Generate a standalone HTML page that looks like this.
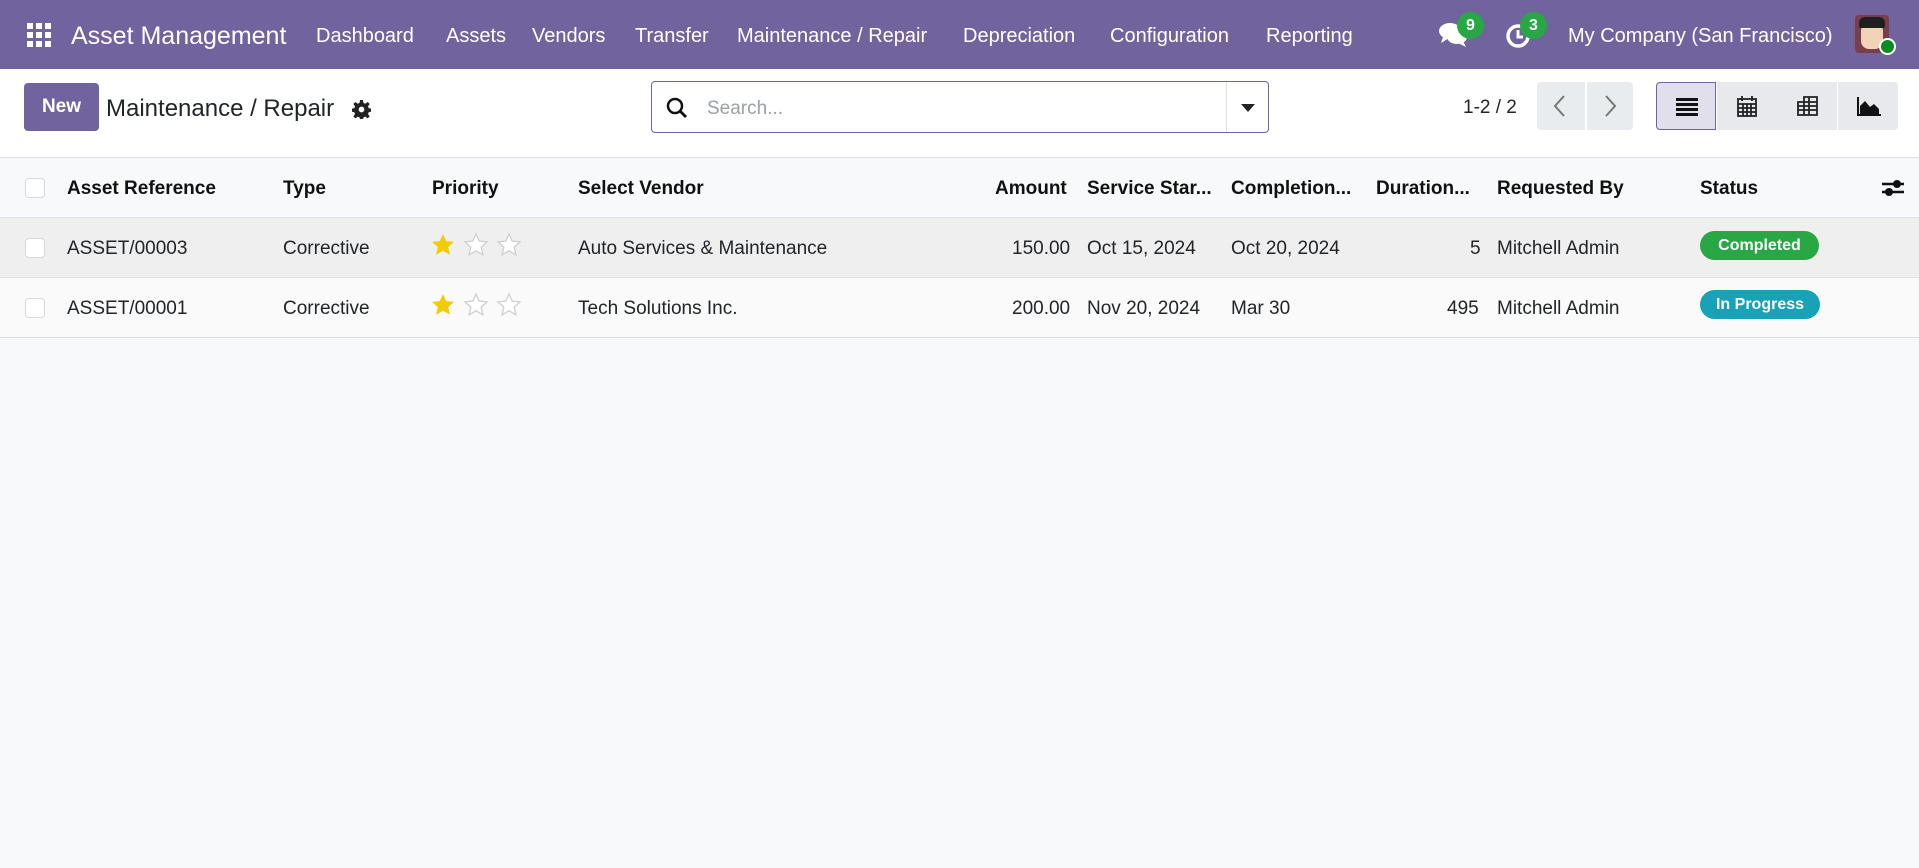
<!DOCTYPE html>
<html><head><meta charset="utf-8"><style>
*{box-sizing:border-box;margin:0;padding:0}
body{width:1919px;height:868px;background:#f8f9fa;font-family:"Liberation Sans",sans-serif;color:#212529;position:relative;overflow:hidden}
.nav{position:absolute;left:0;top:0;width:1919px;height:69px;background:#71639e;color:#fff}
.nav span{position:absolute;top:25px;font-size:20px}
.cp{position:absolute;left:0;top:69px;width:1919px;height:89px;background:#fff;border-bottom:1px solid #dee2e6}
.abs{position:absolute}
.tbl{position:absolute;left:0;top:158px;width:1919px}
.row{position:absolute;left:0;width:1919px;height:60px;border-bottom:1px solid #dee2e6}
.row span{position:absolute;top:20px;font-size:19px;white-space:nowrap}
.h span{font-weight:bold;color:#111}
.cb{position:absolute;left:25px;top:20px;width:20px;height:20px;border:1px solid #d5d8dc;border-radius:4px;background:#fff}
.badge{position:absolute;border-radius:14px;color:#fff;font-weight:bold;font-size:16px;text-align:center}
.vb{position:absolute;top:13px;width:60px;height:48px;background:#e7e9ed}
</style></head><body>
<svg width="0" height="0" style="position:absolute"><defs><path id="star" d="M12 1l3.2 7.1 7.8.8-5.8 5.2 1.7 7.7L12 17.8 5.1 21.8l1.7-7.7L1 8.9l7.8-.8z"/></defs></svg>
<div class="nav">
<svg class="abs" style="left:27px;top:23px" width="24" height="24" viewBox="0 0 24 24" fill="#fff"><rect x="0" y="0" width="6" height="6"/><rect x="9" y="0" width="6" height="6"/><rect x="18" y="0" width="6" height="6"/><rect x="0" y="9" width="6" height="6"/><rect x="9" y="9" width="6" height="6"/><rect x="18" y="9" width="6" height="6"/><rect x="0" y="18" width="6" height="6"/><rect x="9" y="18" width="6" height="6"/><rect x="18" y="18" width="6" height="6"/></svg>
<span style="left:71px;top:22px;font-size:25px">Asset Management</span>
<span style="left:316px">Dashboard</span>
<span style="left:446px">Assets</span>
<span style="left:532px">Vendors</span>
<span style="left:635px">Transfer</span>
<span style="left:737px">Maintenance / Repair</span>
<span style="left:963px">Depreciation</span>
<span style="left:1110px">Configuration</span>
<span style="left:1266px">Reporting</span>
<svg class="abs" style="left:1439px;top:22px" width="30" height="26" viewBox="0 0 30 26" fill="#fff"><ellipse cx="11" cy="9" rx="11" ry="8"/><path d="M4 15 L2 21 L10 16Z"/><ellipse cx="18" cy="15" rx="10" ry="7"/><path d="M24 19 L27 25 L19 21Z"/></svg>
<div class="badge" style="left:1457px;top:12px;width:27px;height:27px;line-height:27px;background:#28a745">9</div>
<svg class="abs" style="left:1505px;top:23px" width="26" height="26" viewBox="0 0 26 26"><circle cx="13" cy="13" r="10" fill="none" stroke="#fff" stroke-width="3.5"/><path d="M13 7v7h5" stroke="#fff" stroke-width="3" fill="none"/></svg>
<div class="badge" style="left:1520px;top:12px;width:27px;height:27px;line-height:27px;background:#28a745">3</div>
<span style="left:1568px">My Company (San Francisco)</span>
<div class="abs" style="left:1855px;top:15px;width:34px;height:38px;background:#7a3d4a;border-radius:4px;overflow:hidden"><div class="abs" style="left:6px;top:8px;width:22px;height:26px;background:#f1d3b8;border-radius:8px"></div><div class="abs" style="left:4px;top:2px;width:26px;height:11px;background:#1f1f1f;border-radius:6px 6px 2px 2px"></div></div>
<div class="abs" style="left:1879px;top:38px;width:17px;height:17px;border-radius:50%;background:#0a8a20;border:2px solid #fff"></div>
</div>
<div class="cp">
<div class="abs" style="left:24px;top:14px;width:75px;height:48px;background:#71639e;border-radius:4px;color:#fff;font-weight:bold;font-size:19px;line-height:48px;text-align:center">New</div>
<div class="abs" style="left:106px;top:26px;font-size:24px">Maintenance / Repair</div>
<svg class="abs" style="left:352px;top:31px" width="19" height="19" viewBox="0 0 20 20"><path fill="#222" d="M8.5 0h3l.5 3 2 .9 2.5-1.8 2.1 2.1-1.8 2.5.9 2 3 .5v3l-3 .5-.9 2 1.8 2.5-2.1 2.1-2.5-1.8-2 .9-.5 3h-3l-.5-3-2-.9-2.5 1.8-2.1-2.1 1.8-2.5-.9-2-3-.5v-3l3-.5.9-2-1.8-2.5 2.1-2.1 2.5 1.8 2-.9z"/><circle cx="10" cy="10" r="3" fill="#fff"/></svg>
<div class="abs" style="left:651px;top:12px;width:618px;height:52px;border:1px solid #71639e;border-radius:4px;background:#fff">
<svg class="abs" style="left:14px;top:15px" width="22" height="22" viewBox="0 0 22 22"><circle cx="9" cy="9" r="7" fill="none" stroke="#111" stroke-width="2.5"/><path d="M14 14l6 6" stroke="#111" stroke-width="2.8"/></svg>
<div class="abs" style="left:55px;top:16px;font-size:19px;color:#9aa0a6">Search...</div>
<div class="abs" style="left:574px;top:0;width:1px;height:50px;background:#dee2e6"></div>
<svg class="abs" style="left:589px;top:22px" width="14" height="9"><path d="M0 0h14L7 8z" fill="#222"/></svg>
</div>
<div class="abs" style="left:1463px;top:28px;font-size:19px">1-2 / 2</div>
<div class="abs" style="left:1537px;top:13px;width:48px;height:48px;background:#e9ecef;border-radius:4px 0 0 4px"></div>
<div class="abs" style="left:1587px;top:13px;width:46px;height:48px;background:#e9ecef;border-radius:0 4px 4px 0"></div>
<svg class="abs" style="left:1553px;top:26px" width="14" height="22"><path d="M11 1L2 11l9 10" stroke="#777" stroke-width="2" fill="none"/></svg>
<svg class="abs" style="left:1603px;top:26px" width="14" height="22"><path d="M3 1l9 10-9 10" stroke="#777" stroke-width="2" fill="none"/></svg>
<div class="vb" style="left:1656px;background:#e2dfec;border:1px solid #71639e;border-radius:4px 0 0 4px"></div>
<div class="vb" style="left:1717px"></div>
<div class="vb" style="left:1777px"></div>
<div class="vb" style="left:1838px;border-radius:0 4px 4px 0"></div>
<svg class="abs" style="left:1676px;top:29px" width="22" height="18" fill="#111"><rect y="0" width="22" height="3"/><rect y="5" width="22" height="3"/><rect y="10" width="22" height="3"/><rect y="15" width="22" height="3"/></svg>
<svg class="abs" style="left:1737px;top:26px" width="20" height="22" fill="none" stroke="#222" stroke-width="1.8"><rect x="1" y="4" width="18" height="17"/><path d="M1 9h18M1 13h18M1 17h18M6 9v12M10 9v12M14 9v12M5 1v5M15 1v5"/></svg>
<svg class="abs" style="left:1797px;top:27px" width="21" height="20" fill="none" stroke="#222" stroke-width="1.8"><path d="M7 1h13v18H1V6h6zM1 10h19M1 14h19M7 1v18M12 1v18M7 6h13"/></svg>
<svg class="abs" style="left:1857px;top:28px" width="24" height="19"><path d="M1 0v18h23" stroke="#111" stroke-width="2" fill="none"/><path d="M3 17V9l5-5 5 6 4-3 5 5v5z" fill="#111"/></svg>
</div>
<div class="tbl">
<div class="row h" style="top:0;background:#f8f9fa"><div class="cb"></div>
<span style="left:67px">Asset Reference</span><span style="left:283px">Type</span><span style="left:432px">Priority</span><span style="left:578px">Select Vendor</span><span style="left:995px">Amount</span><span style="left:1087px">Service Star...</span><span style="left:1231px">Completion...</span><span style="left:1376px">Duration...</span><span style="left:1497px">Requested By</span><span style="left:1700px">Status</span>
<svg class="abs" style="left:1882px;top:20px" width="22" height="20"><path d="M0 6h22M0 14h22" stroke="#111" stroke-width="2.5"/><circle cx="15" cy="6" r="4" fill="#111"/><circle cx="7" cy="14" r="4" fill="#111"/></svg>
</div>
<div class="row" style="top:60px;background:#efefef"><div class="cb"></div>
<span style="left:67px">ASSET/00003</span><span style="left:283px">Corrective</span>
<svg class="abs" style="left:430px;top:14px" width="96" height="26"><use href="#star" x="1" y="1" fill="#f3cc00"/><use href="#star" x="34" y="1" fill="#fff" stroke="#cfcfcf" stroke-width="1.3"/><use href="#star" x="67" y="1" fill="#fff" stroke="#cfcfcf" stroke-width="1.3"/></svg>
<span style="left:578px">Auto Services &amp; Maintenance</span><span style="left:1012px">150.00</span><span style="left:1087px">Oct 15, 2024</span><span style="left:1231px">Oct 20, 2024</span><span style="left:1470px">5</span><span style="left:1497px">Mitchell Admin</span>
<div class="abs" style="left:1700px;top:13px;width:119px;height:29px;border-radius:15px;background:#28a745;color:#fff;font-weight:bold;font-size:16px;text-align:center;line-height:29px">Completed</div>
</div>
<div class="row" style="top:120px;background:#fafafa"><div class="cb"></div>
<span style="left:67px">ASSET/00001</span><span style="left:283px">Corrective</span>
<svg class="abs" style="left:430px;top:14px" width="96" height="26"><use href="#star" x="1" y="1" fill="#f3cc00"/><use href="#star" x="34" y="1" fill="#fff" stroke="#cfcfcf" stroke-width="1.3"/><use href="#star" x="67" y="1" fill="#fff" stroke="#cfcfcf" stroke-width="1.3"/></svg>
<span style="left:578px">Tech Solutions Inc.</span><span style="left:1012px">200.00</span><span style="left:1087px">Nov 20, 2024</span><span style="left:1231px">Mar 30</span><span style="left:1447px">495</span><span style="left:1497px">Mitchell Admin</span>
<div class="abs" style="left:1700px;top:12px;width:120px;height:29px;border-radius:15px;background:#17a2b8;color:#fff;font-weight:bold;font-size:16px;text-align:center;line-height:29px">In Progress</div>
</div>
</div>
</body></html>
